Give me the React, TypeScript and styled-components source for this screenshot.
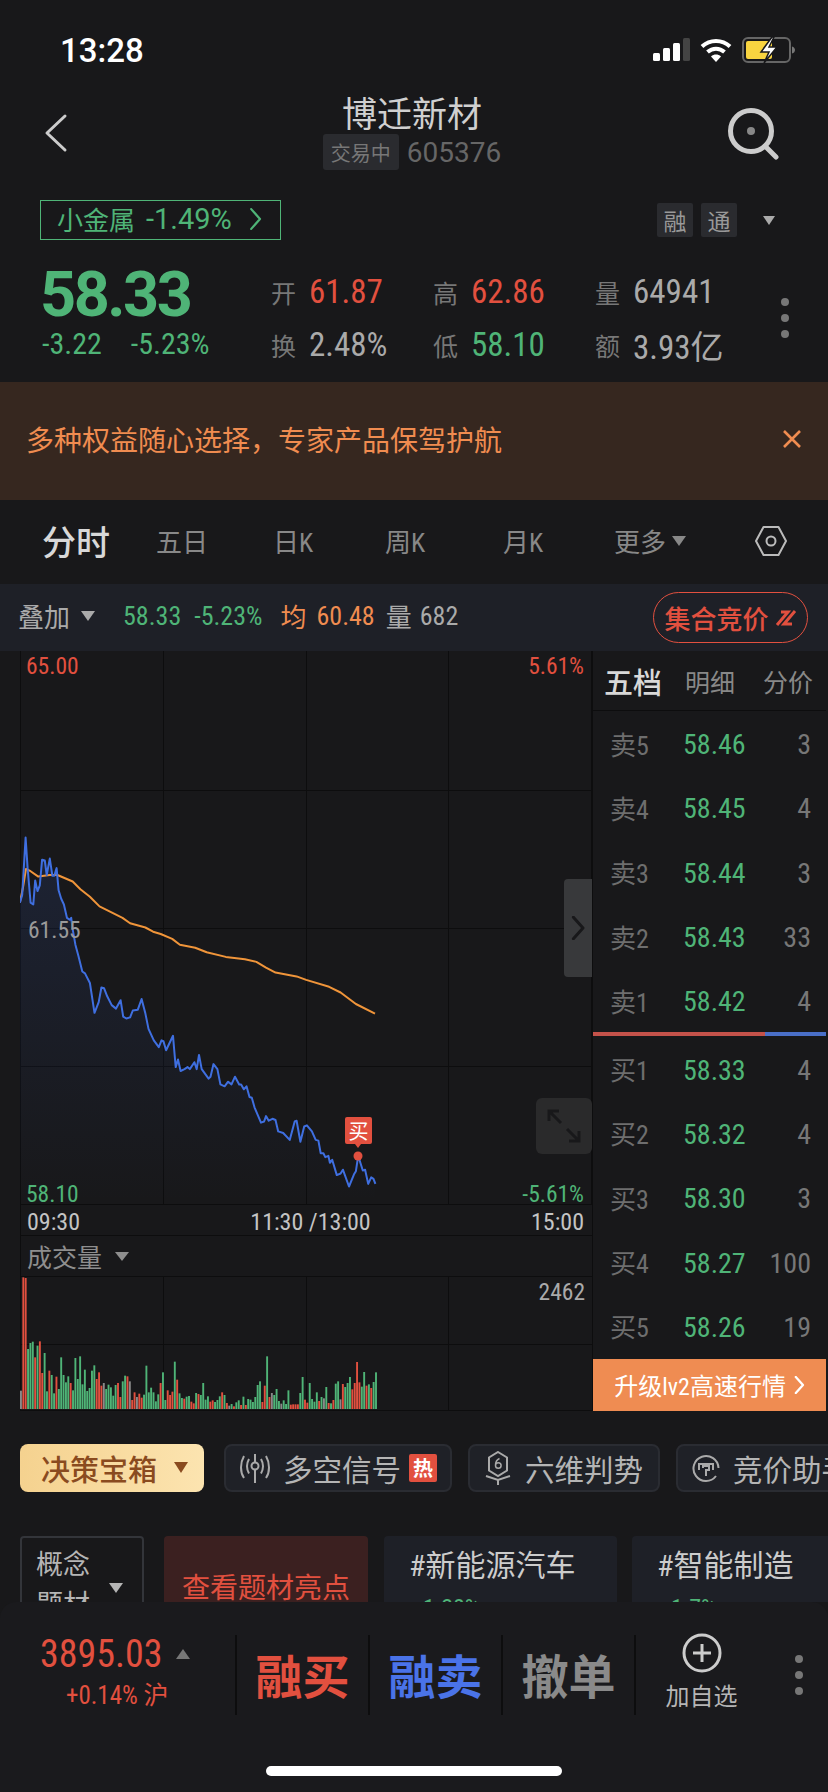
import React from "react";
import styled, { createGlobalStyle } from "styled-components";

const green = "#4fb477";
const red = "#e2503f";
const orange = "#f08c50";
const line = "#0d0d0e";

const GlobalStyle = createGlobalStyle`
  html, body { margin: 0; padding: 0; background: #18181a; }
  * { box-sizing: border-box; }
  body { font-family: "Roboto Condensed", "Noto Sans CJK SC", sans-serif; }
`;

// points read off the reference, in reference pixels scaled 2.613 from x=0, y=650
const bluePts =
  "52,660 58,640 67,490 72,570 80,660 87,665 92,602 98,630 104,615 110,548 117,550 122,588 130,545 137,590 142,590 148,570 153,628 160,650 167,665 175,700 182,705 186,700 190,730 197,770 205,800 215,840 222,845 235,870 247,948 258,920 265,882 272,884 280,905 292,928 303,937 315,915 322,958 330,963 340,960 347,942 360,940 370,912 380,950 388,990 402,1020 415,1038 422,1020 427,1022 434,1046 452,1008 459,1090 465,1070 472,1100 482,1095 490,1090 496,1095 508,1077 514,1095 520,1058 527,1095 545,1120 550,1115 558,1082 568,1095 576,1135 587,1140 596,1128 605,1135 614,1115 625,1135 630,1135 637,1148 644,1140 652,1168 658,1170 665,1195 682,1235 690,1232 695,1218 702,1230 712,1225 720,1228 727,1258 740,1262 757,1280 770,1232 775,1230 785,1285 795,1245 802,1242 815,1258 825,1280 832,1282 838,1315 845,1315 850,1325 858,1322 862,1340 868,1332 880,1372 890,1368 896,1358 912,1402 925,1370 930,1362 936,1322 948,1360 954,1358 962,1395 970,1378 976,1382 981,1395";
const orangePts =
  "52,660 60,620 68,572 80,578 100,592 130,588 150,588 190,605 210,625 235,645 260,670 290,685 320,700 340,714 380,725 400,736 420,742 450,755 470,770 510,778 540,790 590,802 640,808 670,815 695,830 720,843 775,853 800,862 860,880 890,895 930,925 980,950";

const toChart = (pts: string) =>
  pts
    .split(" ")
    .map((p) => {
      const [x, y] = p.split(",").map(Number);
      return `${(x / 2.613 - 20).toFixed(1)},${(y / 2.613 - 1).toFixed(1)}`;
    })
    .join(" ");

// height in 3x zoom units, colour key
const volumes =
  "g55 r395 r393 G180 G198 G202 r155 G190 r203 r108 G168 G53 r115 G102 G47 r97 G60 G155 G102 G80 G98 r78 G56 G153 G90 G158 G74 G118 G54 G63 G115 G131 r90 r110 r70 g78 G60 G73 G65 G40 G72 r78 r36 G83 G100 r98 g83 r27 r50 g36 r46 r34 G43 G130 G50 G64 G50 G23 G44 r78 G110 G27 r56 r42 r52 G142 r88 G47 G33 r31 G37 G39 r22 r17 G48 r45 G42 G78 G28 G38 r22 r26 G21 G27 G38 r50 G42 r18 g10 G15 r8 G20 G26 r12 G37 r12 G30 G28 G21 G36 G72 G83 r21 r70 G158 r36 g48 G42 G60 G24 g16 G26 G15 G56 r13 r14 r14 r14 G48 G96 r28 r19 G78 G30 G22 G50 r24 G36 g32 G66 r18 G17 r27 G76 G83 g29 r75 G66 G78 G96 r59 r78 r141 r80 G67 G111 r70 G74 r63 G81 G110"
    .split(" ")
    .map((v) => ({ h: Number(v.slice(1)) / 3, c: v[0] === "r" ? red : v[0] === "G" ? green : "#8a8a8a" }));

const asks = [
  ["卖5", "58.46", "3"],
  ["卖4", "58.45", "4"],
  ["卖3", "58.44", "3"],
  ["卖2", "58.43", "33"],
  ["卖1", "58.42", "4"],
];
const bids = [
  ["买1", "58.33", "4"],
  ["买2", "58.32", "4"],
  ["买3", "58.30", "3"],
  ["买4", "58.27", "100"],
  ["买5", "58.26", "19"],
];

const Page = styled.div`
  width: 828px;
  height: 1792px;
  overflow: hidden;
  display: flex;
  flex-direction: column;
  background: #18181a;
  color: #ccc;
`;
const Scroll = styled.div`
  flex: 1;
  min-height: 0;
  overflow: hidden;
`;
const StatusBar = styled.div`
  height: 88px;
  padding: 12px 33px 0 60px;
  display: flex;
  align-items: center;
  justify-content: space-between;
`;
const Time = styled.div`
  font-family: Roboto, sans-serif;
  font-weight: 500;
  font-size: 33px;
  color: #fff;
`;
const StatusIcons = styled.div`
  display: flex;
  align-items: center;
  gap: 10px;
  margin-top: -1px;
`;
const NavBar = styled.div`
  height: 112px;
  display: grid;
  grid-template-columns: 1fr auto 1fr;
  align-items: start;
  padding: 10px 48px 0 44px;
`;
const NavIcon = styled.svg<{ $right?: boolean }>`
  justify-self: ${(p) => (p.$right ? "end" : "start")};
  margin-top: ${(p) => (p.$right ? "9px" : "15px")};
`;
const TitleBlock = styled.div`
  display: flex;
  flex-direction: column;
  align-items: center;
`;
const Title = styled.div`
  font-size: 35px;
  line-height: 36px;
  color: #d0d0d0;
`;
const SubRow = styled.div`
  display: flex;
  align-items: center;
  gap: 8px;
  font-family: Roboto, sans-serif;
  font-size: 28px;
  color: #666;
`;
const TradeTag = styled.span`
  width: 76px;
  height: 36px;
  background: #2a2b2f;
  border-radius: 3px;
  font-family: "Noto Sans CJK SC", sans-serif;
  font-size: 20px;
  display: flex;
  align-items: center;
  justify-content: center;
  color: #777;
`;
const TagRow = styled.div`
  height: 40px;
  padding: 0 53px 0 40px;
  display: flex;
  align-items: center;
`;
const SectorTag = styled.div`
  width: 241px;
  height: 40px;
  border: 1px solid ${green};
  color: ${green};
  font-size: 26px;
  display: flex;
  align-items: center;
  padding: 0 0 3px 16px;
`;
const SectorChange = styled.span`
  font-family: Roboto, sans-serif;
  font-size: 29px;
  margin: 0 17px 0 11px;
  white-space: nowrap;
`;
const MarginTag = styled.span`
  width: 36px;
  height: 34px;
  background: #2a2b2f;
  color: #999;
  font-size: 23px;
  display: flex;
  align-items: center;
  justify-content: center;
  margin-left: 8px;
  border-radius: 2px;
`;
const TagRight = styled.div`
  margin-left: auto;
  display: flex;
  align-items: center;
`;
const Triangle = styled.span<{ $w: number; $h: number; $c: string; $up?: boolean }>`
  display: inline-block;
  flex: none;
  width: 0;
  height: 0;
  border-left: ${(p) => p.$w / 2}px solid transparent;
  border-right: ${(p) => p.$w / 2}px solid transparent;
  ${(p) => (p.$up ? "border-bottom" : "border-top")}: ${(p) => p.$h}px solid ${(p) => p.$c};
`;
const TagCaret = styled(Triangle)`
  margin-left: 26px;
`;
const QuoteRow = styled.div`
  height: 142px;
  padding: 25px 39px 0 40px;
  display: flex;
  align-items: flex-start;
`;
const PriceBlock = styled.div`
  width: 231px;
`;
const BigPrice = styled.div`
  font-family: Roboto, sans-serif;
  font-weight: 700;
  font-size: 63px;
  line-height: 62px;
  letter-spacing: -2.5px;
  margin-top: -1px;
  color: ${green};
`;
const Change = styled.div`
  display: flex;
  gap: 29px;
  font-size: 30px;
  line-height: 40px;
  margin-top: -2px;
  padding-left: 2px;
  color: ${green};
`;
const Stats = styled.div`
  display: grid;
  grid-template-columns: repeat(3, 162px);
  grid-auto-rows: 53px;
`;
const Stat = styled.div`
  display: flex;
  align-items: center;
  gap: 13px;
`;
const StatLabel = styled.span`
  font-size: 25px;
  color: #777;
`;
const StatValue = styled.span<{ $c: string }>`
  font-size: 33px;
  color: ${(p) => p.$c};
`;
const DotColumn = styled.div`
  margin-left: auto;
  margin-top: 33px;
  display: flex;
  flex-direction: column;
  gap: 8px;
`;
const Dot = styled.span`
  width: 8px;
  height: 8px;
  border-radius: 50%;
  background: #777;
`;
const Banner = styled.div`
  height: 118px;
  background: #36271f;
  color: ${orange};
  font-size: 28px;
  padding: 0 26px 4px;
  display: flex;
  align-items: center;
  justify-content: space-between;
`;
const Tabs = styled.div`
  height: 84px;
  padding: 0 0 3px 42px;
  display: grid;
  grid-template-columns: 114px 117px 112px 118px 111px 140px auto;
  align-items: center;
`;
const TabItem = styled.div<{ $active?: boolean }>`
  font-size: ${(p) => (p.$active ? "34px" : "26px")};
  color: ${(p) => (p.$active ? "#d8d8d8" : "#888")};
  font-weight: ${(p) => (p.$active ? 500 : 400)};
  display: flex;
  align-items: center;
  gap: 6px;
`;
const OverlayBar = styled.div`
  height: 67px;
  background: #1e2027;
  padding: 0 20px 4px 18px;
  display: flex;
  align-items: center;
  font-size: 26px;
`;
const OverlayText = styled.span<{ $c: string; $ml: number }>`
  color: ${(p) => p.$c};
  margin-left: ${(p) => p.$ml}px;
`;
const OverlayCaret = styled(Triangle)`
  margin-left: 11px;
`;
const AuctionPill = styled.div`
  margin: 4px 0 0 auto;
  width: 155px;
  height: 51px;
  border: 1px solid ${red};
  border-radius: 26px;
  color: ${red};
  font-size: 26px;
  display: flex;
  align-items: center;
  justify-content: center;
  gap: 6px;
  font-weight: 500;
`;
const ChartArea = styled.div`
  display: flex;
  height: 760px;
`;
const ChartColumn = styled.div`
  width: 592px;
  padding-left: 20px;
`;
const MainChart = styled.div`
  position: relative;
  width: 572px;
  height: 553px;
`;
const ChartSvg = styled.svg`
  display: block;
`;
const ChartLabel = styled.span<{ $c: string }>`
  position: absolute;
  font-size: 23.5px;
  line-height: 28px;
  color: ${(p) => p.$c};
`;
const Handle = styled.div`
  position: absolute;
  right: 0;
  top: 228px;
  width: 28px;
  height: 98px;
  background: #38393b;
  border-radius: 4px 0 0 4px;
  display: flex;
  align-items: center;
  justify-content: center;
`;
const ExpandButton = styled.div`
  position: absolute;
  right: 0;
  top: 447px;
  width: 56px;
  height: 56px;
  background: #2a2a2b;
  border-radius: 6px;
  display: flex;
  align-items: center;
  justify-content: center;
`;
const BuyMarker = styled.div`
  position: absolute;
  left: 325px;
  top: 466px;
  width: 27px;
  height: 27px;
  background: ${red};
  border-radius: 2px;
  color: #fff;
  font-size: 20px;
  display: flex;
  align-items: center;
  justify-content: center;
  &::after {
    content: "";
    position: absolute;
    top: 27px;
    left: 10px;
    border-left: 3px solid transparent;
    border-right: 3px solid transparent;
    border-top: 4px solid ${red};
  }
`;
const TimeAxis = styled.div`
  height: 32px;
  padding: 3px 8px 0 6px;
  display: flex;
  align-items: center;
  justify-content: space-between;
  font-size: 24px;
  color: #c4c4c4;
  border-top: 1px solid ${line};
  border-bottom: 1px solid ${line};
  border-left: 1px solid ${line};
`;
const AxisCenter = styled.span`
  margin-left: 10px;
`;
const VolumeHead = styled.div`
  height: 41px;
  padding-left: 6px;
  display: flex;
  align-items: center;
  gap: 13px;
  font-size: 25px;
  color: #8e8e8e;
  border-bottom: 1px solid ${line};
  border-left: 1px solid ${line};
`;
const VolumeChart = styled.div`
  position: relative;
  height: 134px;
`;
const PeakLabel = styled(ChartLabel)`
  right: 7px;
  top: 1px;
`;
const BookPanel = styled.div`
  width: 236px;
  border-left: 1px solid ${line};
  padding-right: 2px;
  display: flex;
  flex-direction: column;
`;
const BookTabs = styled.div`
  height: 60px;
  display: flex;
  align-items: center;
  padding-left: 11px;
  gap: 23px;
  border-bottom: 1px solid ${line};
  font-size: 25px;
  color: #888;
  white-space: nowrap;
`;
const BookTabActive = styled.span`
  font-size: 29px;
  font-weight: 500;
  color: #d8d8d8;
`;
const BookTabLast = styled.span`
  margin-left: 5px;
`;
const BookRow = styled.div`
  height: 64.3px;
  padding: 0 15px 0 17px;
  display: grid;
  grid-template-columns: 73px 1fr auto;
  align-items: center;
  font-size: 28px;
`;
const BookLabel = styled.span`
  font-size: 26px;
  color: #6e6e6e;
`;
const BookPrice = styled.span`
  margin-top: 3px;
  color: ${green};
`;
const BookQty = styled.span`
  margin-top: 3px;
  color: #777;
`;
const BookDivider = styled.div`
  height: 4px;
  flex: none;
  background: linear-gradient(to right, #c4524a 0 172px, #4a6fc8 172px);
`;
const UpgradeButton = styled.div`
  flex: 1;
  margin-top: 1px;
  background: #ef8c52;
  color: #fff;
  font-size: 24px;
  display: flex;
  align-items: center;
  justify-content: center;
  gap: 8px;
`;
const ToolRow = styled.div`
  margin-top: 33px;
  height: 48px;
  padding-left: 20px;
  display: flex;
  gap: 16px;
  white-space: nowrap;
`;
const BoxChip = styled.div`
  width: 184px;
  flex: none;
  margin-right: 4px;
  border-radius: 8px;
  background: linear-gradient(to right, #f5d28f, #fce4b0);
  color: #8a4b1f;
  font-size: 29px;
  font-weight: 500;
  padding: 0 0 1px 21px;
  display: flex;
  align-items: center;
  gap: 17px;
`;
const ToolChip = styled.div<{ $w: number }>`
  width: ${(p) => p.$w}px;
  flex: none;
  border-radius: 8px;
  background: #1f2127;
  border: 2px solid #2a2c32;
  color: #b5b5b5;
  font-size: 29.5px;
  padding: 0 0 1px 14px;
  display: flex;
  align-items: center;
  gap: 13px;
`;
const HotBadge = styled.span`
  width: 28px;
  height: 28px;
  background: ${red};
  border-radius: 2px;
  color: #fff;
  font-size: 20px;
  font-weight: 700;
  display: flex;
  align-items: center;
  justify-content: center;
  margin-left: -5px;
`;
const ConceptRow = styled.div`
  margin-top: 44px;
  height: 120px;
  padding-left: 20px;
  display: flex;
  white-space: nowrap;
`;
const ConceptSelect = styled.div`
  width: 124px;
  flex: none;
  height: 110px;
  border: 2px solid #33353a;
  border-radius: 4px;
  padding: 7px 0 0 14px;
  font-size: 27px;
  line-height: 40px;
  color: #b5b5b5;
  display: flex;
  align-items: center;
  gap: 19px;
  margin-right: 20px;
`;
const ConceptName = styled.div`
  width: 54px;
  white-space: normal;
  align-self: flex-start;
`;
const ConceptCaret = styled(Triangle)`
  margin-bottom: 14px;
`;
const HighlightCard = styled.div`
  width: 204px;
  flex: none;
  height: 100px;
  background: #3b2020;
  border-radius: 4px;
  color: ${red};
  font-size: 28px;
  display: flex;
  align-items: center;
  justify-content: center;
  margin-right: 16px;
`;
const ThemeCard = styled.div`
  width: 233px;
  flex: none;
  height: 110px;
  background: #1e2027;
  border-radius: 4px;
  padding: 10px 0 0 25px;
  margin-right: 15px;
  font-size: 30px;
  line-height: 40px;
  color: #ccc;
`;
const ThemeChange = styled.div`
  color: ${green};
  font-size: 24px;
  line-height: 26px;
  margin-top: 9px;
  padding-left: 8px;
`;
const Footer = styled.div`
  height: 190px;
  flex: none;
  background: #1a1a1d;
  border-radius: 16px 16px 0 0;
  padding-top: 33px;
  display: flex;
  flex-direction: column;
`;
const FooterRow = styled.div`
  height: 80px;
  display: flex;
  align-items: stretch;
`;
const IndexBlock = styled.div`
  width: 235px;
  padding-left: 40px;
  color: ${red};
`;
const IndexValue = styled.div`
  display: flex;
  align-items: center;
  font-size: 38px;
  line-height: 38px;
  gap: 13px;
`;
const IndexChange = styled.div`
  font-size: 25px;
  line-height: 32px;
  padding-left: 26px;
  margin-top: 7px;
`;
const TradeButton = styled.div<{ $c: string }>`
  width: 133px;
  border-left: 2px solid ${line};
  color: ${(p) => p.$c};
  font-size: 47px;
  font-weight: 700;
  display: flex;
  align-items: center;
  justify-content: center;
  padding-bottom: 4px;
`;
const AddButton = styled.div`
  width: 133px;
  border-left: 2px solid ${line};
  display: flex;
  flex-direction: column;
  align-items: center;
  font-size: 24px;
  line-height: 30px;
  color: #b5b5b5;
  gap: 9px;
  svg {
    margin-top: -2px;
  }
`;
const FooterDots = styled(DotColumn)`
  margin: 20px 0 0 0;
  padding-left: 28px;
`;
const HomeBar = styled.div`
  width: 296px;
  height: 10px;
  border-radius: 5px;
  background: #fff;
  align-self: center;
  margin-top: 51px;
`;

function Chevron({ size = 18, color = "#ccc", left = false, sw = 2 }: { size?: number; color?: string; left?: boolean; sw?: number }) {
  return (
    <svg width={size * 0.6} height={size} viewBox="0 0 12 20" fill="none">
      <path d={left ? "M10 1 2 10l8 9" : "M2 1l8 9-8 9"} stroke={color} strokeWidth={sw} strokeLinecap="round" strokeLinejoin="round" />
    </svg>
  );
}

export default function App() {
  const blue = toChart(bluePts);
  const lastX = (981 / 2.613 - 20).toFixed(1);
  return (
    <Page>
      <GlobalStyle />
      <Scroll>
        <StatusBar>
          <Time>13:28</Time>
          <StatusIcons>
            <svg width="37" height="23" viewBox="0 0 37 23">
              <rect x="0" y="15" width="7" height="8" rx="1.5" fill="#fff" />
              <rect x="10" y="10" width="7" height="13" rx="1.5" fill="#fff" />
              <rect x="20" y="5" width="7" height="18" rx="1.5" fill="#fff" />
              <rect x="30" y="0" width="7" height="23" rx="1.5" fill="#444" />
            </svg>
            <svg width="32" height="24" viewBox="0 0 32 24" fill="none">
              <path d="M2 8.5C10 1 22 1 30 8.5" stroke="#fff" strokeWidth="4" />
              <path d="M7.5 14c5-4.5 12-4.5 17 0" stroke="#fff" strokeWidth="4" />
              <path d="M11 18.5c3-2.6 7-2.6 10 0L16 24z" fill="#fff" />
            </svg>
            <svg width="53" height="26" viewBox="0 0 53 26" fill="none">
              <rect x="1" y="1" width="47" height="24" rx="5" stroke="#666" strokeWidth="2" />
              <rect x="4" y="4" width="26" height="18" rx="2" fill="#f8d440" />
              <path d="M50 9.5c2 .5 3 2 3 3.5s-1 3-3 3.5z" fill="#777" />
              <path d="M30 0 19 15h8l-5 11 13-16h-8l5-10z" fill="#fff" stroke="#18181a" strokeWidth="1.5" />
            </svg>
          </StatusIcons>
        </StatusBar>
        <NavBar>
          <NavIcon width="24" height="40" viewBox="0 0 24 40" fill="none">
            <path d="M22 3 4 20l18 17" stroke="#ccc" strokeWidth="3" transform="translate(-1 0)" strokeLinecap="round" strokeLinejoin="round" />
          </NavIcon>
          <TitleBlock>
            <Title>博迁新材</Title>
            <SubRow>
              <TradeTag>交易中</TradeTag>
              605376
            </SubRow>
          </TitleBlock>
          <NavIcon $right width="53" height="53" viewBox="0 0 53 53" fill="none">
            <circle cx="24" cy="24" r="20.5" stroke="#ccc" strokeWidth="5" />
            <circle cx="24" cy="24" r="4" fill="#888" />
            <path d="M38 39 49 50" stroke="#ccc" strokeWidth="5" strokeLinecap="round" />
          </NavIcon>
        </NavBar>
        <TagRow>
          <SectorTag>
            小金属
            <SectorChange>-1.49%</SectorChange>
            <Chevron size={22} color={green} />
          </SectorTag>
          <TagRight>
            <MarginTag>融</MarginTag>
            <MarginTag>通</MarginTag>
            <TagCaret $w={13} $h={9} $c="#aaa" />
          </TagRight>
        </TagRow>
        <QuoteRow>
          <PriceBlock>
            <BigPrice>58.33</BigPrice>
            <Change>
              <span>-3.22</span>
              <span>-5.23%</span>
            </Change>
          </PriceBlock>
          <Stats>
            <Stat><StatLabel>开</StatLabel><StatValue $c={red}>61.87</StatValue></Stat>
            <Stat><StatLabel>高</StatLabel><StatValue $c={red}>62.86</StatValue></Stat>
            <Stat><StatLabel>量</StatLabel><StatValue $c="#aaa">64941</StatValue></Stat>
            <Stat><StatLabel>换</StatLabel><StatValue $c="#aaa">2.48%</StatValue></Stat>
            <Stat><StatLabel>低</StatLabel><StatValue $c={green}>58.10</StatValue></Stat>
            <Stat><StatLabel>额</StatLabel><StatValue $c="#aaa">3.93亿</StatValue></Stat>
          </Stats>
          <DotColumn>
            <Dot />
            <Dot />
            <Dot />
          </DotColumn>
        </QuoteRow>
        <Banner>
          多种权益随心选择，专家产品保驾护航
          <svg width="20" height="20" viewBox="0 0 20 20" fill="none">
            <path d="M2 2l16 16M18 2 2 18" stroke={orange} strokeWidth="2.6" />
          </svg>
        </Banner>
        <Tabs>
          <TabItem $active>分时</TabItem>
          <TabItem>五日</TabItem>
          <TabItem>日K</TabItem>
          <TabItem>周K</TabItem>
          <TabItem>月K</TabItem>
          <TabItem>
            更多
            <Triangle $w={14} $h={10} $c="#888" />
          </TabItem>
          <svg width="34" height="32" viewBox="0 0 34 32" fill="none">
            <path d="M9.5 2h15L32 16l-7.5 14h-15L2 16z" stroke="#bbb" strokeWidth="2" strokeLinejoin="round" />
            <circle cx="17" cy="16" r="4.5" stroke="#bbb" strokeWidth="2" />
          </svg>
        </Tabs>
        <OverlayBar>
          <OverlayText $c="#aaa" $ml={0}>叠加</OverlayText>
          <OverlayCaret $w={14} $h={10} $c="#aaa" />
          <OverlayText $c={green} $ml={28}>58.33</OverlayText>
          <OverlayText $c={green} $ml={13}>-5.23%</OverlayText>
          <OverlayText $c={orange} $ml={18}>均</OverlayText>
          <OverlayText $c={orange} $ml={10}>60.48</OverlayText>
          <OverlayText $c="#aaa" $ml={11}>量</OverlayText>
          <OverlayText $c="#aaa" $ml={8}>682</OverlayText>
          <AuctionPill>
            集合竞价
            <svg width="22" height="18" viewBox="0 0 22 18" fill="none">
              <path d="M2 16 13 3H6M20 2 9 15h8" stroke={red} strokeWidth="3" />
            </svg>
          </AuctionPill>
        </OverlayBar>
        <ChartArea>
          <ChartColumn>
            <MainChart>
              <ChartSvg width="572" height="553" viewBox="0 0 572 553" fill="none">
                <defs>
                  <linearGradient id="area" x1="0" y1="0" x2="0" y2="1">
                    <stop offset="0" stopColor="#3a66d8" stopOpacity="0.14" />
                    <stop offset="1" stopColor="#3a66d8" stopOpacity="0" />
                  </linearGradient>
                </defs>
                <path d="M.5 0V553M143.5 0V553M286.5 0V553M428.5 0V553M571.5 0V553M0 139.5H572M0 277.5H572M0 415.5H572" stroke={line} strokeWidth="1" />
                <polygon points={`0,552 ${blue} ${lastX},552`} fill="url(#area)" />
                <polyline points={toChart(orangePts)} stroke="#f0953a" strokeWidth="2" strokeLinejoin="round" />
                <polyline points={blue} stroke="#3f6fe0" strokeWidth="2" strokeLinejoin="round" />
                <circle cx="338" cy="505" r="4.5" fill={red} />
              </ChartSvg>
              <ChartLabel $c={red} style={{ left: 6, top: 1 }}>65.00</ChartLabel>
              <ChartLabel $c={red} style={{ right: 8, top: 1 }}>5.61%</ChartLabel>
              <ChartLabel $c="#9a9a9a" style={{ left: 8, top: 265 }}>61.55</ChartLabel>
              <ChartLabel $c={green} style={{ left: 6, top: 529 }}>58.10</ChartLabel>
              <ChartLabel $c={green} style={{ right: 8, top: 529 }}>-5.61%</ChartLabel>
              <Handle>
                <Chevron size={24} color="#18181a" sw={2.5} />
              </Handle>
              <ExpandButton>
                <svg width="36" height="36" viewBox="0 0 36 36" fill="none">
                  <path d="M3 13V3h10M3 3l12 12M33 23v10H23M33 33 21 21" stroke="#18181a" strokeWidth="3" />
                </svg>
              </ExpandButton>
              <BuyMarker>买</BuyMarker>
            </MainChart>
            <TimeAxis>
              <span>09:30</span>
              <AxisCenter>11:30 /13:00</AxisCenter>
              <span>15:00</span>
            </TimeAxis>
            <VolumeHead>
              成交量
              <Triangle $w={14} $h={9} $c="#8e8e8e" />
            </VolumeHead>
            <VolumeChart>
              <ChartSvg width="572" height="134" viewBox="0 0 572 134" fill="none">
                <path d="M.5 0V134M143.5 0V134M286.5 0V134M428.5 0V134M0 67.5H572M0 133.5H572" stroke={line} strokeWidth="1" />
                {volumes.map((v, i) => (
                  <rect key={i} x={i * 2.367} y={132 - v.h} width="1.9" height={v.h} fill={v.c} />
                ))}
              </ChartSvg>
              <PeakLabel $c="#aaa">2462</PeakLabel>
            </VolumeChart>
          </ChartColumn>
          <BookPanel>
            <BookTabs>
              <BookTabActive>五档</BookTabActive>
              <span>明细</span>
              <BookTabLast>分价</BookTabLast>
            </BookTabs>
            {asks.map((r) => (
              <BookRow key={r[0]}>
                <BookLabel>{r[0]}</BookLabel>
                <BookPrice>{r[1]}</BookPrice>
                <BookQty>{r[2]}</BookQty>
              </BookRow>
            ))}
            <BookDivider />
            {bids.map((r) => (
              <BookRow key={r[0]}>
                <BookLabel>{r[0]}</BookLabel>
                <BookPrice>{r[1]}</BookPrice>
                <BookQty>{r[2]}</BookQty>
              </BookRow>
            ))}
            <UpgradeButton>
              升级lv2高速行情
              <Chevron size={18} color="#fff" sw={2.5} />
            </UpgradeButton>
          </BookPanel>
        </ChartArea>
        <ToolRow>
          <BoxChip>
            决策宝箱
            <Triangle $w={14} $h={11} $c="#8a4b1f" />
          </BoxChip>
          <ToolChip $w={228}>
            <svg width="30" height="30" viewBox="0 0 30 30" fill="none" stroke="#aaa" strokeWidth="2">
              <circle cx="15" cy="13" r="3.5" />
              <path d="M15 1v8M15 17v13M9 6c-2.500 4.500-2.500 10 0 14.500M21 6c2.500 4.500 2.500 10 0 14.500M4 3c-4 7-4 16 0 22M26 3c4 7 4 16 0 22" />
            </svg>
            多空信号
            <HotBadge>热</HotBadge>
          </ToolChip>
          <ToolChip $w={192}>
            <svg width="28" height="34" viewBox="0 0 28 34" fill="none" stroke="#aaa" strokeWidth="2">
              <path d="M14 1 23 6.500v13L14 25 5 19.500v-13z" />
              <path d="M2 25l12 4 12-4M14 29v5" />
              <path d="M15.500 7.500c-2.500 1-4 3.500-4 7a2.800 2.800 0 1 0 5.600 0 2.800 2.800 0 0 0-5.600 0" strokeWidth="1.5" />
            </svg>
            六维判势
          </ToolChip>
          <ToolChip $w={192}>
            <svg width="28" height="28" viewBox="0 0 28 28" fill="none" stroke="#aaa" strokeWidth="2">
              <path d="M24 22A12.500 12.500 0 1 1 26.500 14" />
              <path d="M7 16V10h14v6M11 14v-2h6v4h-3v6" />
            </svg>
            竞价助手
          </ToolChip>
        </ToolRow>
        <ConceptRow>
          <ConceptSelect>
            <ConceptName>概念题材</ConceptName>
            <ConceptCaret $w={14} $h={10} $c="#b5b5b5" />
          </ConceptSelect>
          <HighlightCard>查看题材亮点</HighlightCard>
          <ThemeCard>
            #新能源汽车
            <ThemeChange>-1.28%</ThemeChange>
          </ThemeCard>
          <ThemeCard>
            #智能制造
            <ThemeChange>-1.7%</ThemeChange>
          </ThemeCard>
        </ConceptRow>
      </Scroll>
      <Footer>
        <FooterRow>
          <IndexBlock>
            <IndexValue>
              3895.03
              <Triangle $up $w={15} $h={10} $c="#777" />
            </IndexValue>
            <IndexChange>+0.14% 沪</IndexChange>
          </IndexBlock>
          <TradeButton $c={red}>融买</TradeButton>
          <TradeButton $c="#4a73e8">融卖</TradeButton>
          <TradeButton $c="#8a8a8a">撤单</TradeButton>
          <AddButton>
            <svg width="40" height="40" viewBox="0 0 40 40" fill="none" stroke="#ccc">
              <circle cx="20" cy="20" r="18" strokeWidth="3" />
              <path d="M20 11v18M11 20h18" strokeWidth="3" />
            </svg>
            加自选
          </AddButton>
          <FooterDots>
            <Dot />
            <Dot />
            <Dot />
          </FooterDots>
        </FooterRow>
        <HomeBar />
      </Footer>
    </Page>
  );
}
